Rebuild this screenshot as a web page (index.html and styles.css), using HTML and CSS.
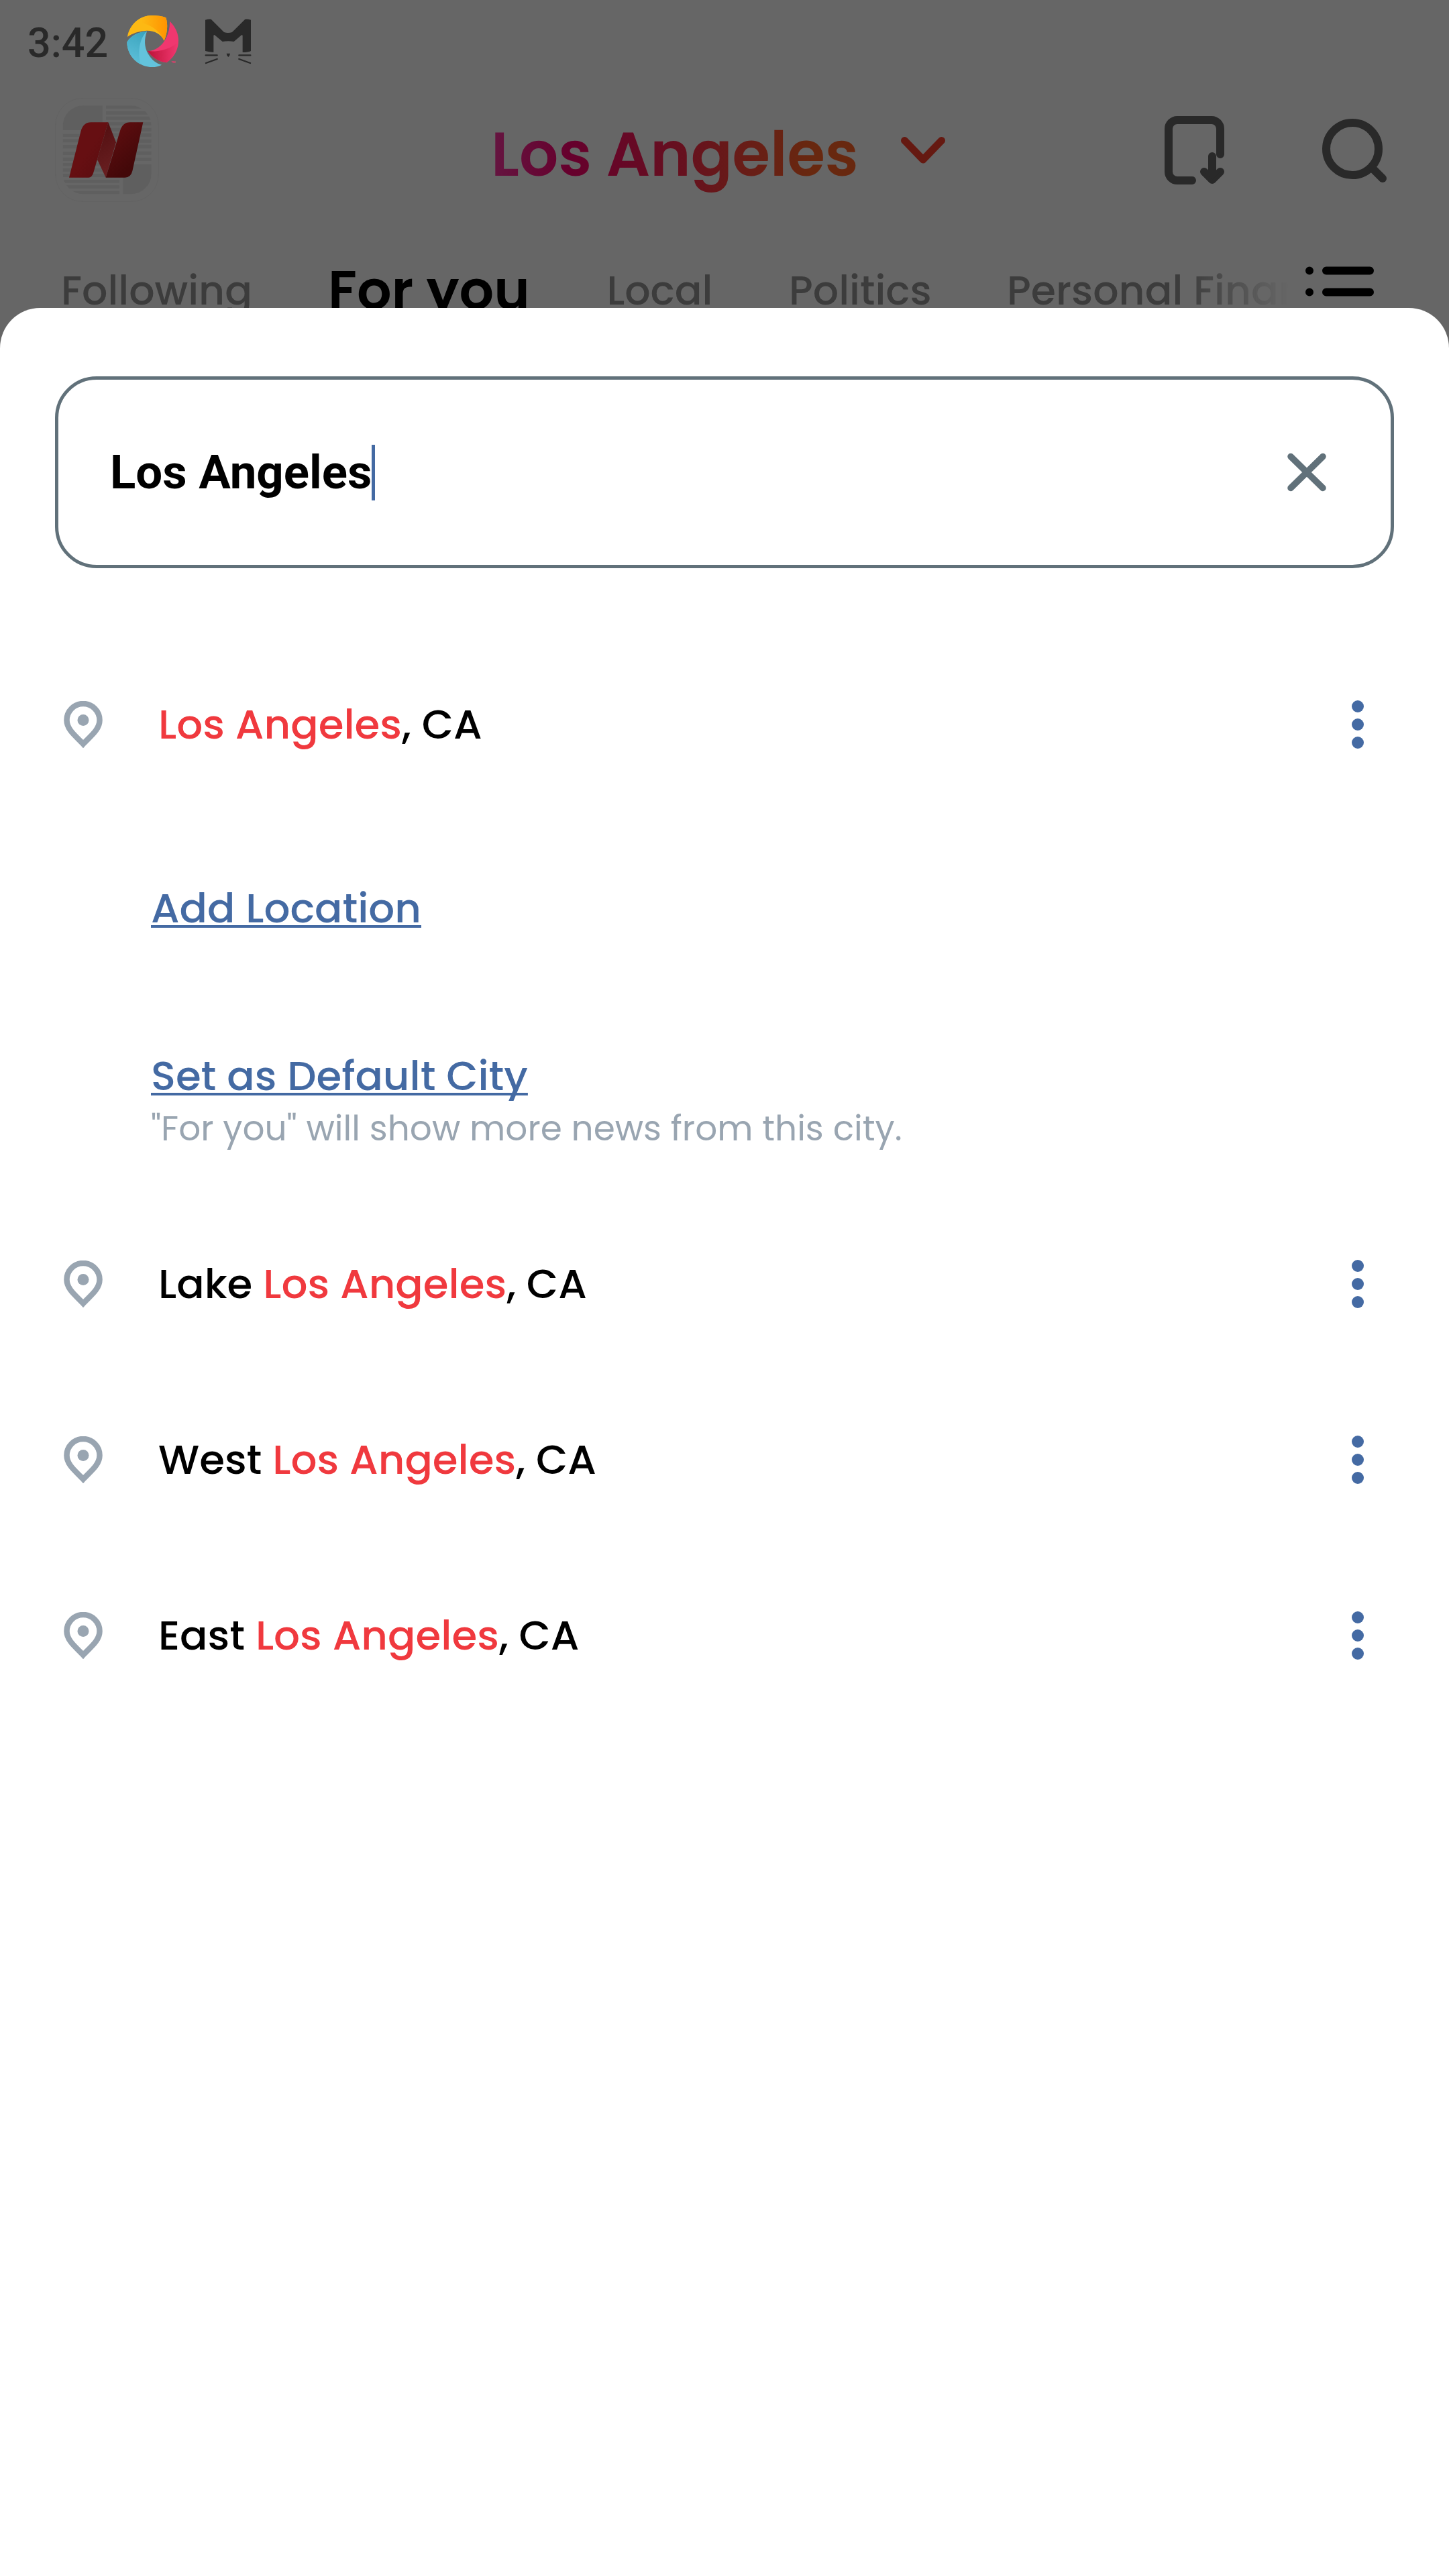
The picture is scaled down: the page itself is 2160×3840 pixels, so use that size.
FILE: index.html
```html
<!DOCTYPE html>
<html lang="en">
<head>
<meta charset="utf-8">
<title>Choose location</title>
<link rel="stylesheet" href="styles.css">
</head>
<body>
<div class="screen">
  <div class="backdrop">
    <div class="status">
      <span class="clock">3:42</span>
      <svg class="swirl" viewBox="27 9 231 231">
        <defs>
          <linearGradient id="sy"><stop offset=".2" stop-color="#fdb913"/><stop offset="1" stop-color="#ff9300"/></linearGradient>
          <linearGradient id="sb" x1=".6" y1="0" x2=".3" y2="1"><stop offset="0" stop-color="#3ca5bf"/><stop offset="1" stop-color="#5fc1da"/></linearGradient>
          <linearGradient id="sp"><stop offset="0" stop-color="#bd1238"/><stop offset="1" stop-color="#f0376f"/></linearGradient>
        </defs>
        <path fill="#fdb913" d="M30 105C38 50 85 9 140 9c22 0 45 3 62 10 10 31 6 71-8 103-16-32-49-47-84-44-30 2-60 12-80 27z"/>
        <path fill="url(#sy)" d="M64 41C120 40 172 70 194 122c14-32 18-72 8-103-17-7-40-10-62-10-30 0-57 12-76 32z"/>
        <path fill="#63c3dc" d="M28 128c17-30 52-46 89-48-13 35-12 70 5 100 16 28 38 45 61 50-13 7-28 10-41 10C80 240 28 190 28 128z"/>
        <path fill="url(#sb)" d="M28 128c17-30 52-46 89-48-34 32-42 92-28 148-38-20-61-58-61-100z"/>
        <path fill="#f0376f" d="M219 35c26 25 39 55 39 87 0 38-18 73-53 98-40-5-65-25-85-52 35 0 65-23 83-58 12-25 17-50 16-75z"/>
        <path fill="url(#sp)" d="M120 168c45 6 95-6 133-36-3 38-18 66-48 88-40-5-65-25-85-52z"/>
        <text x="226" y="221" font-family="Roboto, sans-serif" font-size="12" font-weight="700" fill="#f0376f">TM</text>
      </svg>
      <svg class="cat" viewBox="375 24 210 204">
        <path fill="#292929" d="M378 29q13-4 26-3l58 58q18 6 36 0l58-58q13-1 26 3v139q-12 6-37 6V98l-4-2-35 30q-26-4-51 0l-36-30-4 2v76q-20-1-37-6z"/>
        <path stroke="#292929" stroke-width="7" stroke-linecap="round" d="M380 187h51M529 187h51M381 222l50-18M529 204l50 18"/>
        <path fill="#292929" d="M473 179h16q-1 11-8 16-7-5-8-16z"/>
      </svg>
    </div>
    <header class="appbar">
      <svg class="logo" viewBox="36 48 465 465">
        <defs>
          <clipPath id="tile"><rect x="71" y="82" width="396" height="396" rx="92"/></clipPath>
          <linearGradient id="na" x1="0" y1="0" x2="1" y2="1"><stop offset=".5" stop-color="#660f12"/><stop offset="1" stop-color="#580c0f"/></linearGradient>
          <linearGradient id="nb" x1=".3" y1="0" x2=".5" y2="1"><stop offset="0" stop-color="#520e10"/><stop offset="1" stop-color="#6a2022"/></linearGradient>
          <linearGradient id="nc" x1=".2" y1="0" x2=".8" y2="1"><stop offset="0" stop-color="#610e10"/><stop offset=".8" stop-color="#430809"/></linearGradient>
        </defs>
        <rect x="38" y="50" width="461" height="461" rx="120" fill="none" stroke="#606060" stroke-width="2"/>
        <g clip-path="url(#tile)" fill="#5f5f5f">
          <path d="M71 82h177v110H71zM340 345h127v133H340z"/>
          <path d="M264 82h203v14H264zM264 107h203v15H264zM264 131h203v15H264zM264 157h203v13H264zM264 182h203v15H264zM264 206h203v15H264zM264 233h203v15H264zM264 257h203v17H264zM264 287h203v15H264zM264 315h203v15H264z"/>
          <path d="M71 209h177v13H71zM71 232h177v15H71zM71 258h177v16H71zM71 288h177v15H71zM71 314h177v16H71zM71 339h253v13H71zM71 362h253v15H71zM71 388h253v14H71zM71 414h253v14H71zM71 439h253v14H71zM71 464h253v14H71z"/>
        </g>
        <path fill="url(#na)" d="M99 404l53-209q11-38 45-38h77l-49 166-18 62q-7 19-20 19z"/>
        <path fill="url(#nb)" d="M274 157l35 90-46 157-38-81z"/>
        <path fill="url(#nc)" d="M263 404l64-209q11-38 45-38h58l-48 218q-7 29-33 29z"/>
      </svg>
      <h1 class="city">Los Angeles</h1>
      <svg class="chevron" viewBox="0 0 66 40"><path d="M5.500 5.500L33 34 60.500 5.500"/></svg>
      <svg class="save" viewBox="0 0 90 102"><path d="M83 57V19A13 13 0 0 0 70 6H19A13 13 0 0 0 6 19V83A13 13 0 0 0 19 96H41M71 60V86M59 83L71 95 83 83"/><path class="tip" d="M59 83h24L71 95z"/></svg>
      <svg class="find" viewBox="0 0 96 96"><circle cx="45" cy="45" r="39"/><path d="M74 73L90 89"/></svg>
    </header>
    <nav class="tabs">
      <div class="tablist">
        <span>Following</span><span class="on">For you</span><span>Local</span><span>Politics</span><span>Personal Finance</span>
      </div>
      <svg class="menu" viewBox="0 0 102 45"><path d="M6 6.500h0M6 38.500h0M31 6.500h65M31 38.500h65"/></svg>
    </nav>
  </div>
  <main class="sheet">
    <div class="field"><span class="query">Los Angeles</span><i class="caret"></i><svg class="clear" viewBox="0 0 58 58"><path d="M5 5.500L53 52.500M53 5.500L5 52.500"/></svg></div>
    <div class="row"><svg class="pin" viewBox="0 0 58 70"><path d="M29 64C19 53 4.500 43 4.500 28.500a24.500 24.500 0 0 1 49 0C53.500 43 39 53 29 64z"/><circle cx="29" cy="28.500" r="8.500"/></svg><span class="name"><b>Los Angeles</b>, CA</span><svg class="more" viewBox="0 0 18 72"><circle cx="9" cy="9" r="9"/><circle cx="9" cy="36" r="9"/><circle cx="9" cy="63" r="9"/></svg></div>
    <div class="actions">
      <a>Add Location</a>
      <a>Set as Default City</a>
      <p>"For you" will show more news from this city.</p>
    </div>
    <div class="row"><svg class="pin" viewBox="0 0 58 70"><path d="M29 64C19 53 4.500 43 4.500 28.500a24.500 24.500 0 0 1 49 0C53.500 43 39 53 29 64z"/><circle cx="29" cy="28.500" r="8.500"/></svg><span class="name">Lake <b>Los Angeles</b>, CA</span><svg class="more" viewBox="0 0 18 72"><circle cx="9" cy="9" r="9"/><circle cx="9" cy="36" r="9"/><circle cx="9" cy="63" r="9"/></svg></div>
    <div class="row"><svg class="pin" viewBox="0 0 58 70"><path d="M29 64C19 53 4.500 43 4.500 28.500a24.500 24.500 0 0 1 49 0C53.500 43 39 53 29 64z"/><circle cx="29" cy="28.500" r="8.500"/></svg><span class="name">West <b>Los Angeles</b>, CA</span><svg class="more" viewBox="0 0 18 72"><circle cx="9" cy="9" r="9"/><circle cx="9" cy="36" r="9"/><circle cx="9" cy="63" r="9"/></svg></div>
    <div class="row"><svg class="pin" viewBox="0 0 58 70"><path d="M29 64C19 53 4.500 43 4.500 28.500a24.500 24.500 0 0 1 49 0C53.500 43 39 53 29 64z"/><circle cx="29" cy="28.500" r="8.500"/></svg><span class="name">East <b>Los Angeles</b>, CA</span><svg class="more" viewBox="0 0 18 72"><circle cx="9" cy="9" r="9"/><circle cx="9" cy="36" r="9"/><circle cx="9" cy="63" r="9"/></svg></div>
  </main>
</div>
</body>
</html>
```
FILE: styles.css
```css
* { box-sizing: border-box; margin: 0; }
body { background: #666; font-family: Poppins, Inter, sans-serif; }
svg { display: block; flex: none; fill: none; }
.screen { width: 2160px; height: 3840px; display: flex; flex-direction: column; overflow: hidden; }
.backdrop { flex: none; height: 459px; overflow: hidden; display: flex; flex-direction: column; }

.status { flex: none; height: 122px; display: flex; align-items: center; padding-left: 41px; }
.clock { width: 148px; padding-top: 6px; font: 500 61px/80px Roboto, sans-serif; color: #292929; }
.swirl { width: 77px; height: 77px; }
.cat { width: 70px; height: 68px; margin: 2px 0 0 39px; }

.appbar { flex: none; height: 202px; display: flex; align-items: center; padding-left: 82px; }
.logo { width: 155px; height: 155px; }
.city { width: 605px; margin-left: 495px; padding-top: 14px; font-size: 91.400px; line-height: 130px; font-weight: 600; white-space: nowrap; color: transparent;
  background: linear-gradient(90deg, #65133f 2%, #66002d 21%, #660f1f 50%, #681c17 68%, #68280f 87%) 0 0 / 550px 100% no-repeat; -webkit-background-clip: text; background-clip: text; }
.chevron { width: 66px; height: 40px; margin: 1px 0 0 6px; stroke: #651911; stroke-width: 11; stroke-linecap: round; stroke-linejoin: round; }
.save { width: 90px; height: 102px; margin: 1px 0 0 327px; stroke: #292929; stroke-width: 12; stroke-linecap: round; stroke-linejoin: round; }
.save .tip { fill: #292929; stroke: none; }
.find { width: 96px; height: 96px; margin: 3px 0 0 145px; stroke: #292929; stroke-width: 12; stroke-linecap: round; }

.tabs { flex: none; height: 217px; display: flex; align-items: center; padding-left: 91px; }
.tablist { width: 1829px; overflow: hidden; display: grid; grid-template-columns: 398px 415.500px 271.500px 325px auto; align-items: center; white-space: nowrap;
  font-size: 60.200px; line-height: 120px; font-weight: 500; color: #3c3c3c;
  -webkit-mask-image: linear-gradient(90deg, #000 1670px, transparent 1829px); mask-image: linear-gradient(90deg, #000 1670px, transparent 1829px); }
.tablist .on { font-size: 81px; font-weight: 600; color: #000; }
.menu { width: 102px; height: 45px; margin: -26px 0 0 26px; stroke: #000; stroke-width: 12; stroke-linecap: round; }

.sheet { flex: 1; background: #fff; border-radius: 60px 60px 0 0; padding-top: 102px; }
.field { height: 286px; margin: 0 82px 102px; border: 5px solid #61717a; border-radius: 62px; display: flex; align-items: center; padding: 0 96px 0 77px; }
.query { font: 700 70.800px/84px Roboto, sans-serif; color: #000; }
.caret { width: 5px; height: 83px; background: #446aa3; margin-right: auto; }
.clear { width: 58px; height: 58px; stroke: #61717a; stroke-width: 9.500; stroke-linecap: round; }

.row { height: 262px; display: flex; align-items: center; padding: 0 127px 0 95px; }
.pin { width: 58px; height: 70px; stroke: #99a5b1; stroke-width: 8.500; }
.pin circle { fill: #99a5b1; stroke: none; }
.name { flex: 1; padding: 0 0 1px 83px; font-size: 61.200px; line-height: 93px; font-weight: 500; color: #000; }
.name b { font-weight: 500; color: #f0393e; }
.more { width: 18px; height: 72px; fill: #446aa3; }

.actions { height: 572px; padding: 96px 0 0 225px; display: flex; flex-direction: column; align-items: flex-start; }
.actions a { font-size: 61.100px; line-height: 93px; font-weight: 500; color: #446aa3; text-decoration: underline 3.500px; text-underline-offset: 3.500px; text-decoration-skip-ink: none; }
.actions a + a { margin-top: 157px; }
.actions p { margin-top: 1px; font-size: 51.700px; line-height: 62px; color: #99a5b1; white-space: nowrap; }
```
